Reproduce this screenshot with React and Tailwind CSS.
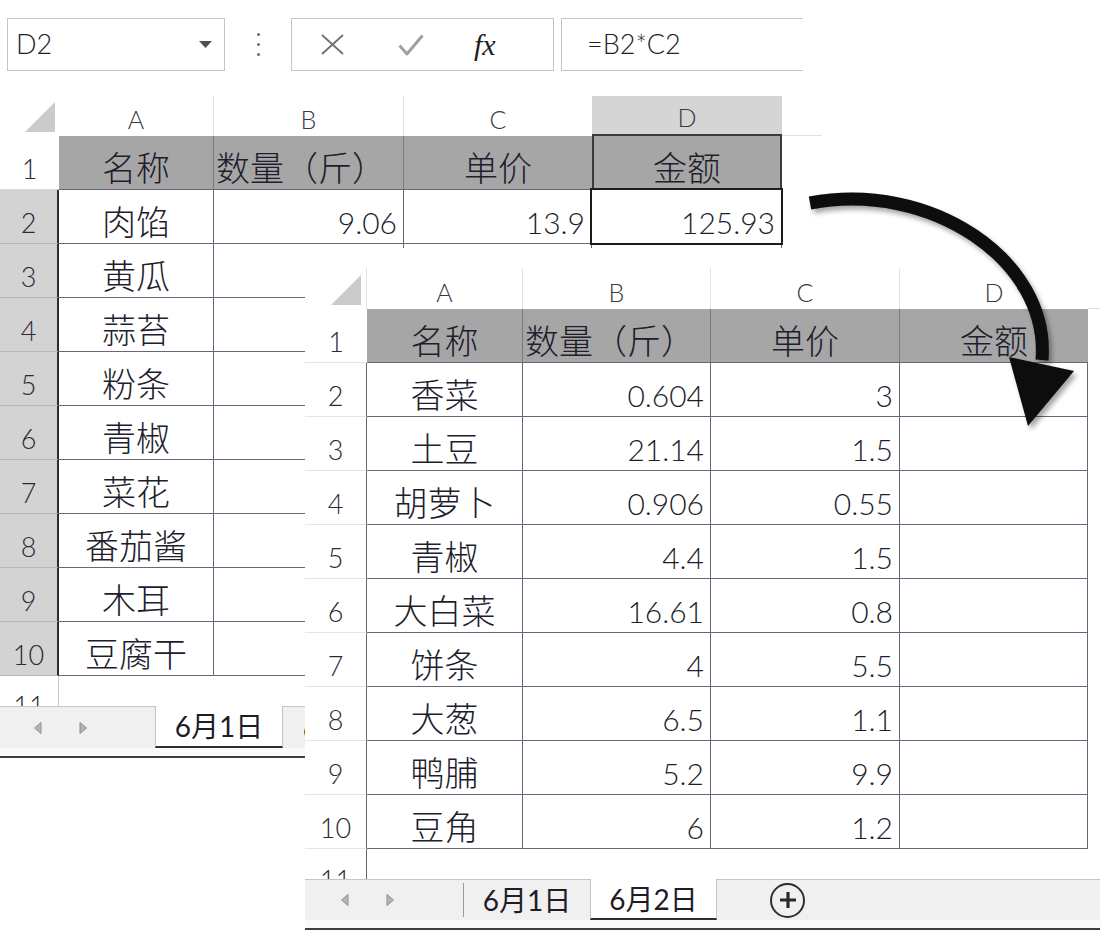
import React from "react";

const BACK_ROWS = [
  ["肉馅", "9.06", "13.9", "125.93"],
  ["黄瓜", "", "", ""],
  ["蒜苔", "", "", ""],
  ["粉条", "", "", ""],
  ["青椒", "", "", ""],
  ["菜花", "", "", ""],
  ["番茄酱", "", "", ""],
  ["木耳", "", "", ""],
  ["豆腐干", "", "", ""],
];

const FRONT_ROWS = [
  ["香菜", "0.604", "3"],
  ["土豆", "21.14", "1.5"],
  ["胡萝卜", "0.906", "0.55"],
  ["青椒", "4.4", "1.5"],
  ["大白菜", "16.61", "0.8"],
  ["饼条", "4", "5.5"],
  ["大葱", "6.5", "1.1"],
  ["鸭脯", "5.2", "9.9"],
  ["豆角", "6", "1.2"],
];

function Corner() {
  return (
    <svg width="30" height="30" viewBox="0 0 30 30">
      <path d="M30 0V30H0Z" fill="#cbcbcb" />
    </svg>
  );
}

function TabArrow({ dir }) {
  return (
    <svg width="10" height="14" viewBox="0 0 10 14">
      {dir === "left" ? (
        <path d="M8 1.5V12.5L1.5 7Z" fill="#b4b4b4" stroke="#909090" strokeWidth="1" strokeLinejoin="round" />
      ) : (
        <path d="M2 1.5V12.5L8.5 7Z" fill="#b4b4b4" stroke="#909090" strokeWidth="1" strokeLinejoin="round" />
      )}
    </svg>
  );
}

function HeadLetter({ w, className = "", children }) {
  return (
    <div className={`${w} h-full flex items-end justify-center ${className}`}>
      <span className="text-[25px] leading-[34px] font-light text-[#3a3744]">{children}</span>
    </div>
  );
}

function RowNum({ className = "", children }) {
  return (
    <div className={`h-full flex items-end justify-center ${className}`}>
      <span className="text-[27px] leading-[40px] font-light text-[#2c2936]">{children}</span>
    </div>
  );
}

function Cell({ w, className = "", align = "center", num, sel, children }) {
  const justify =
    align === "center" ? "justify-center" : align === "right" ? "justify-end pr-[6px]" : "justify-start pl-[2px]";
  return (
    <div className={`${w} h-full flex items-end ${justify} ${sel ? "relative" : ""} ${className}`}>
      <span className={num ? "text-[30px] leading-[42px] font-light" : "text-[34px] leading-[42px] font-light"}>
        {children}
      </span>
      {sel && <div className="absolute -inset-[2px] border-2 border-[#1c1c1c]" />}
    </div>
  );
}

function FormulaBar() {
  return (
    <div className="flex items-center pl-[7px] pt-[18px]">
      <div className="w-[218px] h-[53px] border border-[#c4c4c4] bg-white flex items-center justify-between pl-[8px] pr-[12px]">
        <span className="text-[27px] font-light text-[#222]">D2</span>
        <svg width="13" height="7" viewBox="0 0 13 7">
          <path d="M0 0H13L6.5 7Z" fill="#505050" />
        </svg>
      </div>
      <div className="w-[66px] flex flex-col items-center gap-[7px]">
        <span className="w-[3px] h-[3px] rounded-full bg-[#6a6a6a]" />
        <span className="w-[3px] h-[3px] rounded-full bg-[#6a6a6a]" />
        <span className="w-[3px] h-[3px] rounded-full bg-[#6a6a6a]" />
      </div>
      <div className="w-[263px] h-[53px] border border-[#c4c4c4] bg-white flex items-center pl-[29px]">
        <svg width="23" height="21" viewBox="0 0 23 21">
          <path d="M1 1L22 20M22 1L1 20" stroke="#707070" strokeWidth="1.8" fill="none" />
        </svg>
        <svg className="ml-[54px]" width="26" height="22" viewBox="0 0 26 22">
          <path d="M1.5 11.5L9 20L24.5 1.5" stroke="#a0a0a0" strokeWidth="3" fill="none" strokeLinejoin="round" />
        </svg>
        <span className="ml-[50px] font-['Liberation_Serif',serif] italic text-[30px] leading-none text-[#1e1e1e]">fx</span>
      </div>
      <div className="ml-[7px] w-[242px] h-[53px] border border-r-0 border-[#c4c4c4] bg-white flex items-center pl-[25px]">
        <span className="text-[27px] font-light text-[#222]">=B2*C2</span>
      </div>
    </div>
  );
}

function BackSheet() {
  const w = ["w-[155px]", "w-[190px]", "w-[188px]", "w-[190px]"];
  const line = "border-r border-b border-[#6a667a]";
  return (
    <div className="mt-[25px]">
      <div className="flex h-[40px]">
        <div className="w-[59px] flex items-end justify-end pr-[4px] pb-[4px]">
          <Corner />
        </div>
        <HeadLetter w={w[0]} className="border-r border-r-[#e2e2e2]">A</HeadLetter>
        <HeadLetter w={w[1]} className="border-r border-r-[#e2e2e2]">B</HeadLetter>
        <HeadLetter w={w[2]}>C</HeadLetter>
        <HeadLetter w={w[3]} className="bg-[#d5d5d5] border-b-2 border-b-[#3a3a3a]">D</HeadLetter>
        <div className="w-[40px] border-b border-b-[#dedede]" />
      </div>

      <div className="flex h-[54px]">
        <RowNum className="w-[59px] border-b border-b-[#d6d6d6]">1</RowNum>
        <Cell w={w[0]} className="bg-[#a6a6a6] border-r border-r-[#7b7785] border-b border-b-[#6a667a]">名称</Cell>
        <Cell w={w[1]} align="left" className="bg-[#a6a6a6] border-r border-r-[#7b7785] border-b border-b-[#6a667a]">
          数量（斤）
        </Cell>
        <Cell w={w[2]} className="bg-[#a6a6a6] border-b border-b-[#6a667a]">单价</Cell>
        <Cell w={w[3]} className="bg-[#a6a6a6] border-x-2 border-x-[#3a3a3a] border-b border-b-[#6a667a]">金额</Cell>
      </div>

      {BACK_ROWS.map((r, i) => (
        <div key={i} className="flex h-[54px]">
          <RowNum className="w-[59px] bg-[#d3d3d3] border-b border-b-[#b8b8b8] border-r-2 border-r-[#2c2c2c]">
            {i + 2}
          </RowNum>
          <Cell w={w[0]} className={line}>{r[0]}</Cell>
          <Cell w={w[1]} align="right" num className={line}>{r[1]}</Cell>
          <Cell w={w[2]} align="right" num className={line}>{r[2]}</Cell>
          <Cell w={w[3]} align="right" num sel={i === 0} className={line}>{r[3]}</Cell>
        </div>
      ))}

      <div className="flex h-[30px] overflow-hidden">
        <div className="w-[59px] flex justify-center items-start border-r border-r-[#c8c8c8]">
          <span className="mt-[10px] text-[27px] leading-[40px] font-light text-[#2c2936]">11</span>
        </div>
      </div>

      <div className="flex h-[42px] bg-[#f0f0f0] border-t border-t-[#c6c6c6]">
        <div className="w-[155px] flex items-center pl-[33px] gap-[35px]">
          <TabArrow dir="left" />
          <TabArrow dir="right" />
        </div>
        <div className="w-[128px] -mt-px bg-white border-x border-x-[#c4c4c4] border-b-2 border-b-[#2e2e2e] flex items-center justify-center">
          <span className="text-[28px] leading-none text-[#1f1c28]">6月1日</span>
        </div>
        <div className="w-[128px] flex items-center justify-center">
          <span className="text-[28px] leading-none text-[#1f1c28]">6月2日</span>
        </div>
      </div>
      <div className="h-[8px] bg-[#fafafa]" />
      <div className="h-[2px] bg-[#3e3e3e]" />
    </div>
  );
}

function FrontSheet() {
  const w = ["w-[156px]", "w-[188px]", "w-[189px]", "w-[188px]"];
  const line = "border-r border-b border-[#6a667a]";
  return (
    <div className="absolute left-[305px] top-[248px] w-[797px] h-[686px] bg-white pt-[20px]">
      <div className="flex h-[41px]">
        <div className="w-[62px] flex items-end justify-end pr-[5px] pb-[4px] border-r border-r-[#e2e2e2]">
          <Corner />
        </div>
        <HeadLetter w={w[0]} className="border-r border-r-[#e2e2e2]">A</HeadLetter>
        <HeadLetter w={w[1]} className="border-r border-r-[#e2e2e2]">B</HeadLetter>
        <HeadLetter w={w[2]} className="border-r border-r-[#e2e2e2]">C</HeadLetter>
        <HeadLetter w={w[3]}>D</HeadLetter>
        <div className="w-[12px] border-b border-b-[#dedede]" />
      </div>

      <div className="flex h-[54px]">
        <RowNum className="w-[62px] border-b border-b-[#e4e4e4]">1</RowNum>
        <Cell w={w[0]} className="bg-[#a6a6a6] border-r border-r-[#7b7785] border-b border-b-[#6a667a]">名称</Cell>
        <Cell w={w[1]} align="left" className="bg-[#a6a6a6] border-r border-r-[#7b7785] border-b border-b-[#6a667a]">
          数量（斤）
        </Cell>
        <Cell w={w[2]} className="bg-[#a6a6a6] border-r border-r-[#7b7785] border-b border-b-[#6a667a]">单价</Cell>
        <Cell w={w[3]} className="bg-[#a6a6a6] border-b border-b-[#6a667a]">金额</Cell>
      </div>

      {FRONT_ROWS.map((r, i) => (
        <div key={i} className="flex h-[54px]">
          <RowNum className="w-[62px] border-b border-b-[#e4e4e4] border-r border-r-[#6a667a]">{i + 2}</RowNum>
          <Cell w={w[0]} className={line}>{r[0]}</Cell>
          <Cell w={w[1]} align="right" num className={line}>{r[1]}</Cell>
          <Cell w={w[2]} align="right" num className={line}>{r[2]}</Cell>
          <Cell w={w[3]} className={line}></Cell>
        </div>
      ))}

      <div className="flex h-[30px] overflow-hidden">
        <div className="w-[62px] flex justify-center items-start border-r border-r-[#6a667a]">
          <span className="mt-[11px] text-[27px] leading-[40px] font-light text-[#2c2936]">11</span>
        </div>
      </div>

      <div className="flex h-[41px] mr-[2px] bg-[#f0f0f0] border-t border-t-[#c6c6c6]">
        <div className="w-[158px] flex items-center pl-[35px] gap-[35px]">
          <TabArrow dir="left" />
          <TabArrow dir="right" />
        </div>
        <div className="w-[127px] my-[3px] border-l border-l-[#9a9a9a] flex items-center justify-center">
          <span className="text-[28px] leading-none text-[#1f1c28]">6月1日</span>
        </div>
        <div className="w-[127px] -mt-px bg-white border-x border-x-[#c4c4c4] border-b-2 border-b-[#2e2e2e] flex items-center justify-center">
          <span className="text-[28px] leading-none text-[#1f1c28]">6月2日</span>
        </div>
        <div className="ml-[53px] self-center w-[35px] h-[35px] rounded-full border-2 border-[#2e2e2e] flex items-center justify-center">
          <svg width="18" height="18" viewBox="0 0 18 18">
            <path d="M9 1V17M1 9H17" stroke="#2a2a2a" strokeWidth="3.2" />
          </svg>
        </div>
      </div>
      <div className="h-[8px] bg-[#fafafa]" />
      <div className="h-[2px] mr-[2px] bg-[#3e3e3e]" />
    </div>
  );
}

function CurvedArrow() {
  return (
    <svg className="absolute left-0 top-0 pointer-events-none" width="1102" height="934" viewBox="0 0 1102 934">
      <defs>
        <filter id="arrowShadow" x="-10%" y="-10%" width="130%" height="130%">
          <feDropShadow dx="3" dy="4" stdDeviation="2.5" floodColor="#000" floodOpacity="0.35" />
        </filter>
      </defs>
      <g filter="url(#arrowShadow)">
        <path d="M810 203 C930 180 1050 260 1042 360" fill="none" stroke="#0b0b0b" strokeWidth="13" />
        <path d="M1009 357 L1074 371 L1028 426 Z" fill="#0b0b0b" />
      </g>
    </svg>
  );
}

export default function App() {
  return (
    <div className="relative w-[1102px] h-[934px] bg-white overflow-hidden font-['Lato','Noto_Sans_CJK_SC',sans-serif] text-[#211d2c]">
      <div className="w-[822px]">
        <FormulaBar />
        <BackSheet />
      </div>
      <FrontSheet />
      <CurvedArrow />
    </div>
  );
}
